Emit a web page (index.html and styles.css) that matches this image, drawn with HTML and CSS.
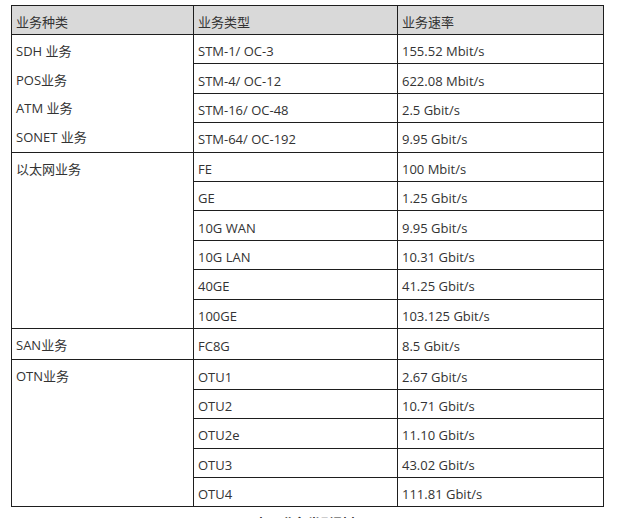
FILE: index.html
```html
<!DOCTYPE html>
<html>
<head>
<meta charset="utf-8">
<link rel="stylesheet" href="styles.css">
</head>
<body>
<div class="page">
<table class="svc">
  <thead>
    <tr><th class="c1">业务种类</th><th class="c2">业务类型</th><th class="c3">业务速率</th></tr>
  </thead>
  <tbody>
    <tr><td rowspan="4" class="grp"><p>SDH 业务</p><p>POS业务</p><p>ATM 业务</p><p>SONET 业务</p></td><td>STM-1/ OC-3</td><td>155.52 Mbit/s</td></tr>
    <tr><td>STM-4/ OC-12</td><td>622.08 Mbit/s</td></tr>
    <tr><td>STM-16/ OC-48</td><td>2.5 Gbit/s</td></tr>
    <tr><td>STM-64/ OC-192</td><td>9.95 Gbit/s</td></tr>
    <tr><td rowspan="6" class="grp"><p>以太网业务</p></td><td>FE</td><td>100 Mbit/s</td></tr>
    <tr><td>GE</td><td>1.25 Gbit/s</td></tr>
    <tr><td>10G WAN</td><td>9.95 Gbit/s</td></tr>
    <tr><td>10G LAN</td><td>10.31 Gbit/s</td></tr>
    <tr><td>40GE</td><td>41.25 Gbit/s</td></tr>
    <tr><td>100GE</td><td>103.125 Gbit/s</td></tr>
    <tr><td class="grp"><p>SAN业务</p></td><td>FC8G</td><td>8.5 Gbit/s</td></tr>
    <tr><td rowspan="5" class="grp"><p>OTN业务</p></td><td>OTU1</td><td>2.67 Gbit/s</td></tr>
    <tr><td>OTU2</td><td>10.71 Gbit/s</td></tr>
    <tr><td>OTU2e</td><td>11.10 Gbit/s</td></tr>
    <tr><td>OTU3</td><td>43.02 Gbit/s</td></tr>
    <tr><td>OTU4</td><td>111.81 Gbit/s</td></tr>
  </tbody>
</table>
<div class="caption">表 1 业务类型列表</div>
</div>
</body>
</html>
```
FILE: styles.css
```css
html, body {
  margin: 0;
  padding: 0;
  background: #ffffff;
}
.page {
  padding: 5px 0 0 11px;
  font-family: "Open Sans", "Noto Sans CJK SC", sans-serif;
  font-size: 13px;
  color: #333333;
}
.svc {
  border-collapse: collapse;
  width: 592px;
  table-layout: fixed;
}
.svc th, .svc td {
  border: 1px solid #1e1e1e;
  height: 29.4px;
  padding: 4px 4px 0 4px;
  text-align: left;
  font-weight: normal;
  vertical-align: middle;
  line-height: 16px;
  box-sizing: border-box;
}
.svc th {
  background: #d9d9d9;
  height: 29px;
  padding-top: 3px;
}
.c1 { width: 182px; }
.c2 { width: 204px; }
.c3 { width: 206px; }
.svc td.grp {
  vertical-align: top;
  padding-top: 2px;
}
.grp p {
  margin: 0;
  line-height: 28.5px;
}
.caption {
  width: 592px;
  text-align: center;
  margin-top: 8px;
  font-size: 13px;
  font-weight: bold;
  line-height: 16px;
}
```
